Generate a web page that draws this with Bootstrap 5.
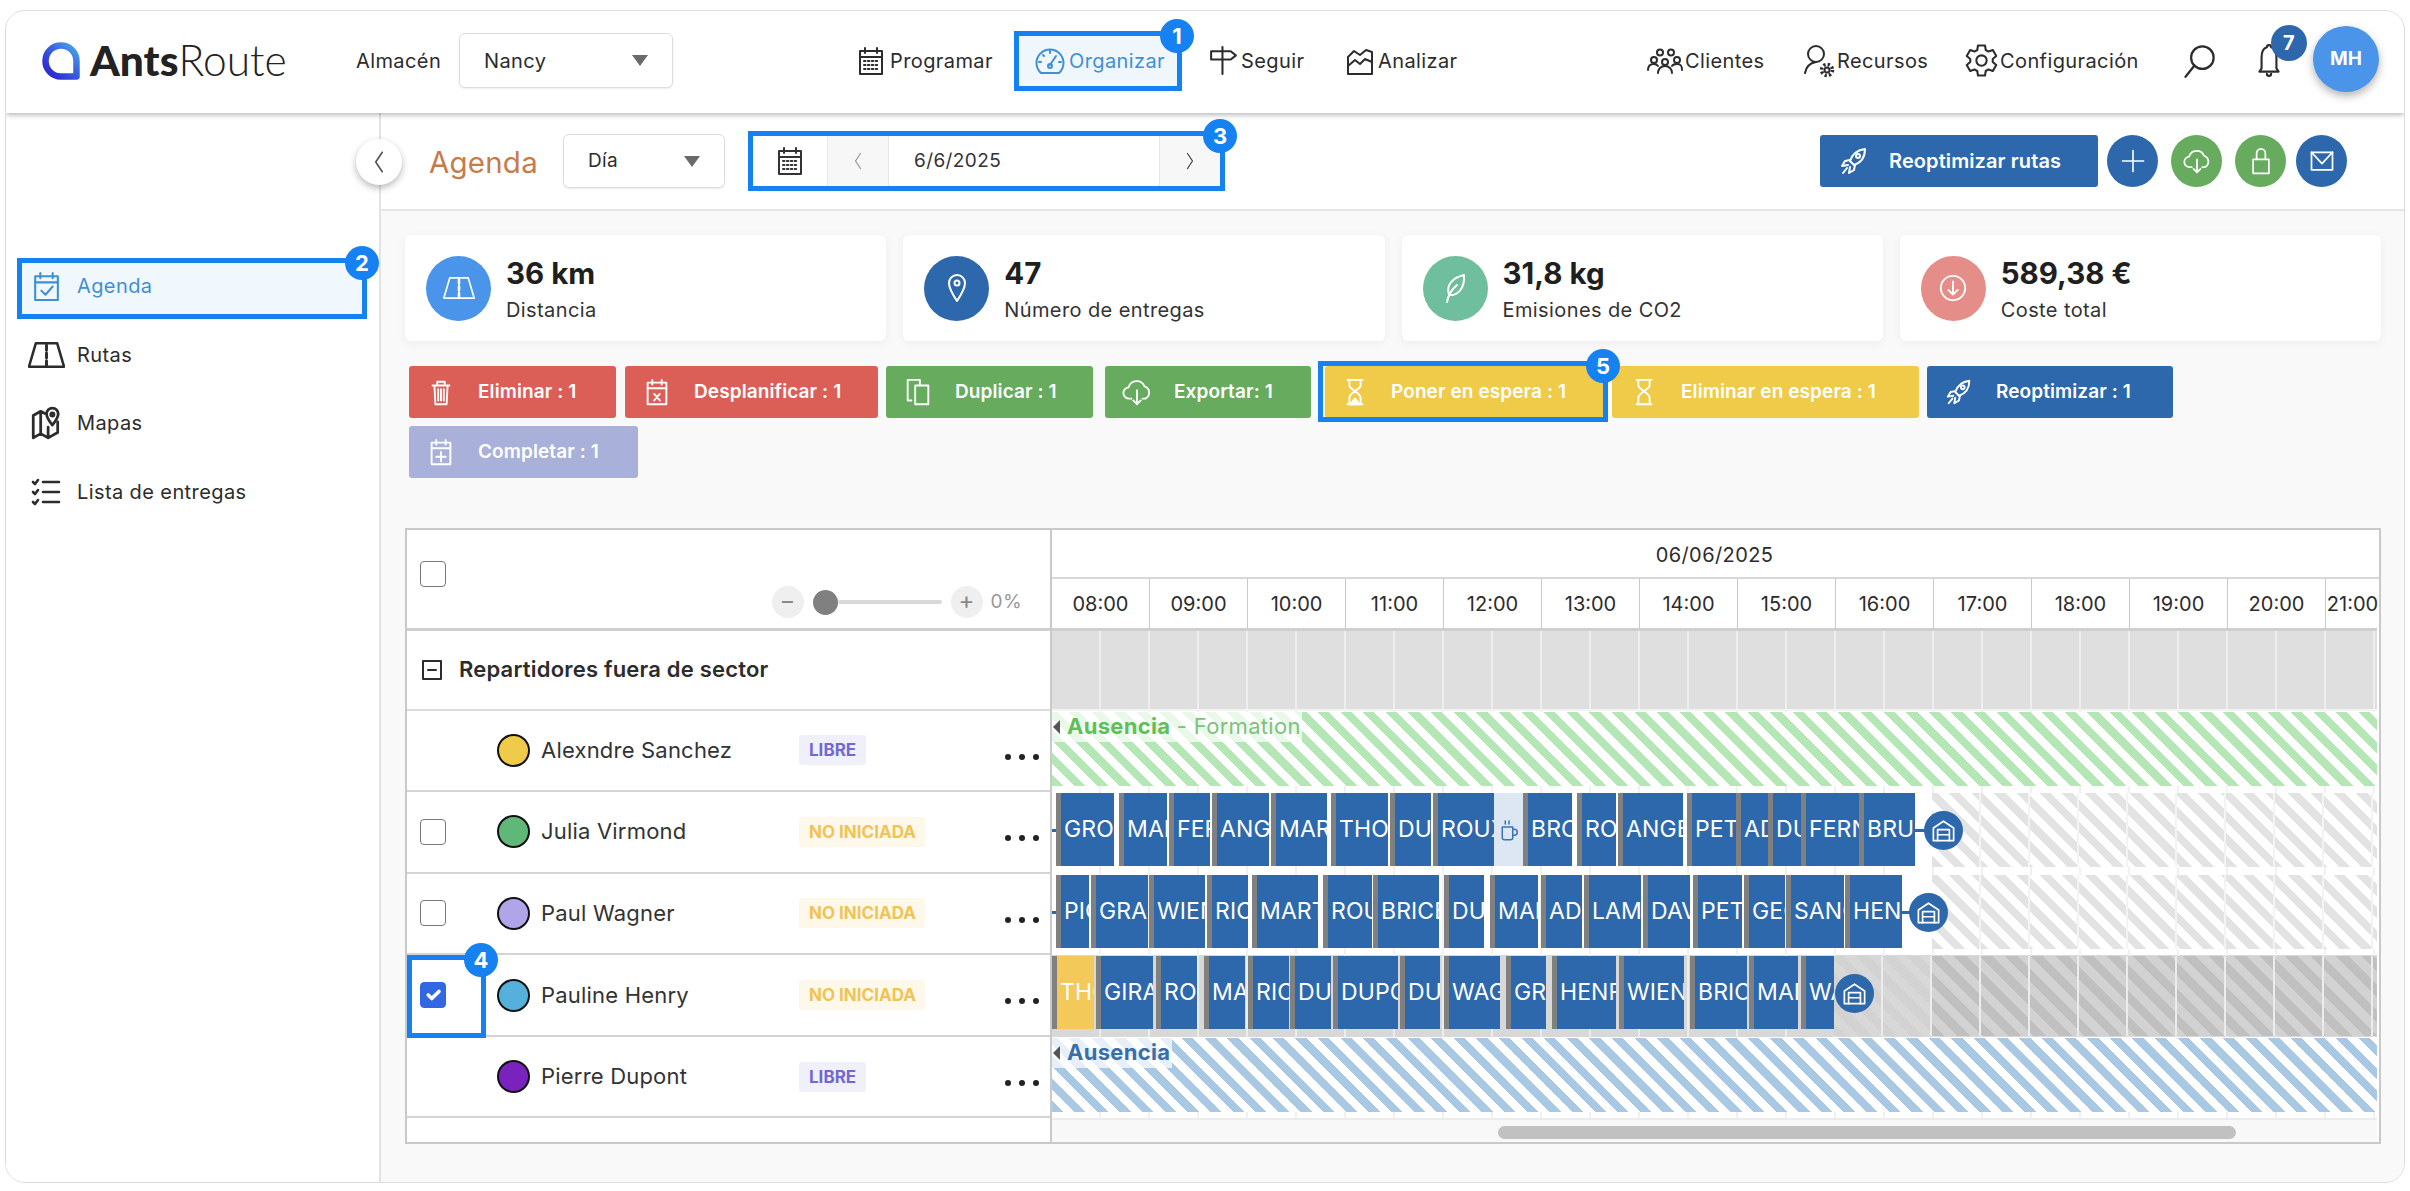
<!DOCTYPE html>
<html lang="es">
<head>
<meta charset="utf-8">
<title>AntsRoute</title>
<link rel="stylesheet" href="https://cdn.jsdelivr.net/npm/bootstrap@5.3.0/dist/css/bootstrap.min.css">
<style>
html,body{background:#fff;height:1191px;overflow:hidden}
body{font-family:"Inter","Noto Sans",sans-serif;font-size:20px;color:#2c2c2c;letter-spacing:.4px}
svg.ic{fill:none;stroke:currentColor;stroke-width:2;stroke-linecap:round;stroke-linejoin:round;flex:none}
svg.ic-h{stroke-width:2.6}
.frame{margin:10px 5px 0;height:1173px;border:1px solid #dcdcdc;border-radius:20px;overflow:hidden;position:relative;background:#fff}
.anno{position:absolute;border:5px solid #1681f0;pointer-events:none;z-index:5}
.anno-b{position:absolute;right:-17px;top:-17px;width:34px;height:34px;border-radius:50%;background:#1681f0;color:#fff;font-weight:700;font-size:22px;line-height:34px;text-align:center;letter-spacing:0;z-index:6}
.hd{height:102px;padding:0 25px 3px 36px;box-shadow:0 2px 5px rgba(0,0,0,.28);position:relative;z-index:3;background:#fff}
.logo{width:250px;font-family:"Lato",sans-serif;font-size:42.500px;letter-spacing:0;color:#222;line-height:1;gap:10px}
.logo b{font-weight:900}.logo span{font-weight:300}
.alm{margin-left:64px;width:103px}
.selbox{border:1px solid #ddd;border-radius:6px;background:#fff;box-shadow:0 1px 2px rgba(0,0,0,.08);padding:0 24px;display:flex;align-items:center;justify-content:space-between}
.sel-a{width:214px;height:55px}
.sel-b{width:162px;height:54px;font-size:19px}
.caret{width:0;height:0;border-left:8px solid transparent;border-right:8px solid transparent;border-top:11px solid #6a6a6a}
.nv{display:flex;align-items:center;height:60px;gap:3px;color:#2c2c2c;text-decoration:none;flex:none;position:relative;white-space:nowrap}
.n1{margin-left:182px;width:141px}
.n2{margin-left:18px;width:168px;background:#eff7fd;color:#3f8fd6;padding-left:20px}
.n3{margin-left:25px;width:96px;gap:1px}
.n4{margin-left:40px;width:112px;gap:1px}
.n5{width:117px;gap:2px}
.n6{margin-left:40px;width:123px;gap:1px}
.n7{margin-left:38px;width:175px;gap:2px}
.n8{margin-left:41px;width:34px}
.n9{margin-left:37px;width:29px}
.avatar{margin-left:32px;width:66px;height:66px;border-radius:50%;background:#4a94e9;color:#fff;font-weight:700;font-size:19px;line-height:66px;text-align:center;box-shadow:0 4px 8px rgba(0,0,0,.3);flex:none;letter-spacing:0;margin-top:-3px}
.b7{position:absolute;left:19px;width:36px;height:36px;border-radius:50%;background:#2e68ac;color:#fff;font-size:20px;font-weight:700;line-height:36px;text-align:center;z-index:2;margin-top:-6px}
.wrapb{height:1070px}
.side{width:375px;flex:none;border-right:2px solid #e3e3e3;padding:145px 0 0 11px;background:#fff}
.sd{display:flex;align-items:center;width:350px;height:61px;color:#2c2c2c;text-decoration:none;margin-bottom:7.5px;position:relative}
.sd .sw{width:60px;display:flex;justify-content:center;flex:none;padding-right:2px}
.sd-on{background:#f0f8fe;color:#3f8fd6;padding-bottom:5px;margin-bottom:5px}
.mainc{flex:1;min-width:0;background:#f9f9f9;position:relative}
.sub{height:98px;background:#fff;border-bottom:2px solid #e6e6e6;padding:0 57px 0 48px;position:relative}
.collapse-b{position:absolute;left:-25px;top:26px;width:46px;height:46px;border-radius:50%;background:#fff;box-shadow:0 3px 7px rgba(0,0,0,.28);display:flex;align-items:center;justify-content:center;z-index:4;color:#555}
.ttl{width:134px;font-size:29.500px;color:#c87b4a;letter-spacing:.2px;padding-top:2px}
.dategrp{margin-left:23px;width:477px;height:60px;position:relative;padding:5px;display:flex;background:#fff}
.dc{display:flex;align-items:center;justify-content:center;height:50px;color:#333}
.dc1{width:75px;border-right:1px solid #e8e8e8}
.dc2{width:61px;background:#f7f7f7;border-right:1px solid #e8e8e8;color:#999}
.dc3{width:271px;border-right:1px solid #e8e8e8;justify-content:flex-start;padding-left:25px;font-size:19px}
.dc4{width:60px;background:#f7f7f7;color:#444}
.reo{width:278px;height:52px;background:#2e68ac;color:#fff;border:0;border-radius:3px;font-weight:600;font-size:20px;display:flex;align-items:center;padding:0 0 0 18px;gap:19px;letter-spacing:.1px}
.cb{width:51px;height:52px;border-radius:50%;display:flex;align-items:center;justify-content:center;color:#fff;border:0;padding:0;flex:none}
.cb-blue{background:#2e68ac}.cb-green{background:#66ab5e}
.mg9{margin-left:9px}.mg13{margin-left:13px}.mg10{margin-left:10px}
.cnt{padding:24px 23px 0 24px}
.kpis{gap:17px}
.kpi{flex:1 1 0;height:106px;background:#fff;border-radius:6px;box-shadow:0 2px 10px rgba(0,0,0,.05);display:flex;align-items:center;padding:0 0 0 21px;gap:15px}
.kc{width:65px;height:65px;border-radius:50%;display:flex;align-items:center;justify-content:center;color:#fff;flex:none}
.ktx{padding-top:3px}
.kv{font-size:29.5px;font-weight:700;line-height:34px;color:#1f1f1f;letter-spacing:0}
.kl{font-size:20px;line-height:28px;margin-top:6px;color:#333}
.acts{margin:25px 0 0 4px;column-gap:8px;row-gap:8px;height:112px;position:relative}
.ab{height:52px;border:0;border-radius:3px;color:#fff;font-weight:600;font-size:19px;display:flex;align-items:center;padding:0;position:relative;white-space:nowrap;letter-spacing:.1px}
.ab .aw{width:69px;display:flex;justify-content:center;flex:none;padding-right:6px}
.r{background:#dc5f57}.g{background:#66ab5e}.y{background:#f0cb4a}.u{background:#2e68ac}.p{background:#a9b0d9}
.a1{width:207px;margin-right:1px}.a2{width:253px}.a3{width:207px;margin-right:4px}.a4{width:206px;margin-right:6px}.a5{width:278px;margin-right:1px}.a6{width:307px}.a7{width:246px}.a8{width:229px}
.a5 .aw{width:66px}
.anno-p{inset:-5px -5px -4px -7px}
.gnt{margin-top:50px;height:616px;border:2px solid #c9c9c9;display:flex;width:1976px;background:#fff}
.gl{width:645px;flex:none;border-right:2px solid #c9c9c9}
.gr{flex:1;min-width:0;display:flex;flex-direction:column}
.lh{height:100.500px;border-bottom:3px solid #cfcfcf;position:relative;padding:31px 0 0 13px;flex:none}
.form-check-input.ck{width:26px;height:26px;margin:0;border:1.5px solid #777;border-radius:4px;background-color:#fff}
.form-check-input.ck:checked{background-color:#3267e3;border-color:#3267e3}
.zoomz{position:absolute;right:28px;top:56px;display:flex;align-items:center;color:#999;font-size:19px}
.zb{width:32px;height:32px;border-radius:50%;background:#efefef;color:#888;font-size:24px;line-height:30px;text-align:center;flex:none}
.zth{width:25px;height:25px;border-radius:50%;background:#808080;margin-left:9px;flex:none}
.ztr{width:104px;height:4px;background:#d9d9d9;border-radius:2px;margin-right:9px;flex:none}
.lg{height:80px;border-bottom:2px solid #dcdcdc;display:flex;align-items:center;padding-left:15px;font-weight:600;font-size:22px;gap:17px;letter-spacing:.2px;flex:none}
.lr{height:81.6px;border-bottom:2px solid #d4d4d4;display:flex;align-items:center;position:relative;padding-left:13px;flex:none}
.cbw{width:77px;flex:none;display:flex;align-items:center}
.dot{width:33px;height:33px;border-radius:50%;border:2px solid #111;flex:none;margin-right:11px}
.nm{width:258px;flex:none;font-size:22px;color:#333;letter-spacing:.2px;white-space:nowrap}
.st{height:30px;font-size:17px;font-weight:700;line-height:30px;padding:0 10px;border-radius:3px;letter-spacing:0;flex:none;white-space:nowrap}
.st-l{background:#f0f0fb;color:#7268d2;width:67px}
.st-n{background:#fef8ea;color:#f0c357;width:126px}
.dots3{position:absolute;left:598px;top:43px;display:flex;gap:8px}
.dots3 i{width:6px;height:6px;border-radius:50%;background:#222;display:block}
.hdate{height:49px;text-align:center;line-height:50px;font-size:20px;border-bottom:2px solid #d8d8d8;padding-right:2px;flex:none}
.hhrs{height:51.500px;display:flex;border-bottom:3px solid #cfcfcf;margin-right:2px;flex:none}
.hh{width:98px;flex:none;border-right:1px solid #c9c9c9;text-align:center;line-height:50px;font-size:20px;letter-spacing:0}
.hh-last{width:53px;border-right:0;font-size:20px}
.grows{flex:1;position:relative;margin-right:2px}
.gw{height:81.6px;position:relative;overflow:hidden;background-color:#fff;background-image:repeating-linear-gradient(90deg,transparent 0 47px,#f1f1f1 47px 49px)}
.gw-g{height:80px;background-color:#dfdfdf;background-image:repeating-linear-gradient(90deg,transparent 0 47px,#eeeeee 47px 49px);border-bottom:2px solid #f3f3f3}
.gs{position:absolute;left:0;right:0;top:1px;height:74px}
.gs-g{background-image:repeating-linear-gradient(45deg,#b5e6b5 0 8px,#fff 8px 16px)}
.gs-b{background-image:repeating-linear-gradient(45deg,#a9c8e4 0 8px,#fff 8px 16px)}
.gs-n{left:880px;background-image:repeating-linear-gradient(90deg,transparent 0 47px,#f3f3f3 47px 49px),repeating-linear-gradient(45deg,#e3e3e3 0 8px,#fff 8px 16px)}
.gw-d{background-color:#d8d8d8;background-image:repeating-linear-gradient(90deg,transparent 0 47px,#ececec 47px 49px)}
.gs-d{left:880px;height:80px;background-image:repeating-linear-gradient(90deg,transparent 0 47px,#ececec 47px 49px),repeating-linear-gradient(45deg,#c0c0c0 0 9px,#d2d2d2 9px 18px)}
.gs-e{left:782px;right:445px;height:80px;background-image:repeating-linear-gradient(90deg,transparent 0 47px,#ececec 47px 49px),repeating-linear-gradient(45deg,#d2d2d2 0 9px,#d8d8d8 9px 18px)}
.lab{position:absolute;left:0;top:1px;height:30px;background:rgba(255,255,255,.72);font-size:22px;line-height:28px;padding-left:15px;letter-spacing:.3px;white-space:nowrap;overflow:hidden}
.lab::before{content:"";position:absolute;left:1px;top:8px;border-top:7px solid transparent;border-bottom:7px solid transparent;border-right:7px solid #555}
.lab-g{width:250px;color:#7cc27c}.lab-g b{color:#5fc05a;font-weight:700}
.lab-b{width:120px;color:#3a6ea8}.lab-b b{font-weight:700}
.bk{position:absolute;top:1px;height:73px;background:#2e68ac;border-left:5px solid #808080;color:#fff;font-size:23px;line-height:73px;padding-left:3px;overflow:hidden;white-space:nowrap;letter-spacing:.1px}
.bk-y{background:#f3c95a;color:#fff}
.brk{position:absolute;top:1px;height:73px;background:#dde7f3;color:#3b74b5;display:flex;align-items:center;justify-content:center}
.dep{position:absolute;width:39px;height:39px;border-radius:50%;background:#2e68ac;color:#fff;display:flex;align-items:center;justify-content:center;z-index:2}
.lnk{position:absolute;height:3px;background:#2e68ac}
.sb{height:23.500px;background:#f8f8f8;border-top:2px solid #ececec;position:relative}
.sbt{position:absolute;left:446px;top:6px;width:738px;height:13px;border-radius:7px;background:#c1c1c1}
</style>
</head>
<body>
<svg width="0" height="0" class="position-absolute">
<defs>
<linearGradient id="lg1" x1="0" x2="1" y1="1" y2="0"><stop offset="0" stop-color="#2a1fd0"/><stop offset=".55" stop-color="#3a5fe0"/><stop offset="1" stop-color="#4ba8e8"/></linearGradient>
<symbol id="i-cal" viewBox="0 0 32 32"><rect x="5" y="6" width="22" height="23"/><path d="M5 12h22M10 3v5M22 3v5"/><path d="M9 16h14M9 20h14M9 24h14" stroke-dasharray="1.5 2.4"/></symbol>
<symbol id="i-calc" viewBox="0 0 32 32"><rect x="5" y="6" width="22" height="23"/><path d="M5 12h22M10 3v5M22 3v5M11 20l4 4 7-8"/></symbol>
<symbol id="i-calx" viewBox="0 0 32 32"><rect x="6" y="6" width="20" height="23"/><path d="M6 12h20M11 3v5M21 3v5M13 18l6 7M19 18l-6 7"/></symbol>
<symbol id="i-calp" viewBox="0 0 32 32"><rect x="6" y="6" width="20" height="23"/><path d="M6 12h20M11 3v5M21 3v5M16 16v10M11 21h10"/></symbol>
<symbol id="i-gauge" viewBox="0 0 32 32"><path d="M7 28a13.5 13.5 0 1 1 18 0z"/><path d="M16 20l6-9M5 17h2M25 17h2M16 6v2M9 10l1 1"/><circle cx="16" cy="21" r="2"/></symbol>
<symbol id="i-sign" viewBox="0 0 32 32"><path d="M15 3v26M4 7h19l5 4-5 4H4z"/></symbol>
<symbol id="i-chart" viewBox="0 0 32 32"><path d="M4 12l6-6 6 4 6-5 6 2v22H4z"/><path d="M4 21l7-6 5 4 5-5 7 3"/></symbol>
<symbol id="i-people" viewBox="0 0 36 26"><circle cx="13" cy="4.500" r="3"/><circle cx="24" cy="4.500" r="3"/><circle cx="7" cy="12" r="3"/><circle cx="18" cy="14" r="3"/><circle cx="30" cy="12" r="3"/><path d="M1 22c0-4 2-6 6-6 2 0 3 .5 4 2M25 18c1-1.500 3-2 5-2 4 0 5 2 5 6M11 25c0-4 3-7 7-7s7 3 7 7"/></symbol>
<symbol id="i-res" viewBox="0 0 32 34"><circle cx="12" cy="10" r="8"/><path d="M1 29c1-6 5-10 11-11"/><circle cx="23" cy="26" r="2.500"/><circle cx="23" cy="26" r="5.500" stroke-dasharray="2.200 2.120" stroke-width="3.500" stroke-linecap="butt"/></symbol>
<symbol id="i-gear" viewBox="0 0 32 32"><path d="M12.600 1.400H19.400L20.100 5.800L22.800 7.300L27 5.800L30.300 11.600L26.900 14.500V17.500L30.300 20.400L27 26.200L22.800 24.700L20.100 26.200L19.400 30.600H12.600L11.900 26.200L9.200 24.700L5 26.200L1.700 20.400L5.100 17.500V14.500L1.700 11.600L5 5.800L9.200 7.300L11.900 5.800Z"/><circle cx="16" cy="16" r="5"/></symbol>
<symbol id="i-search" viewBox="0 0 32 32"><circle cx="19" cy="13" r="10"/><path d="M12 20l-8 10"/></symbol>
<symbol id="i-bell" viewBox="0 0 32 32"><path d="M16 1a2 2 0 0 1 2 2c4 1 5 5 5 10v10l2 3H7l2-3V13c0-5 1-9 5-10a2 2 0 0 1 2-2z"/><path d="M14 28a2 2 0 0 0 4 0"/></symbol>
<symbol id="i-rocket" viewBox="0 0 32 32"><path d="M27 4c-8 1-13 6-15 12l4 4c6-2 11-7 11-16z"/><path d="M12 15l-5 1-3 5 6-1M17 20l-1 5-5 3 1-6M9 23l-4 5"/><circle cx="20" cy="11" r="2"/></symbol>
<symbol id="i-plus" viewBox="0 0 32 32"><path d="M16 3v26M3 16h26"/></symbol>
<symbol id="i-cloud" viewBox="0 0 32 32"><path d="M10 23H8a6 6 0 0 1-1-12 9 9 0 0 1 17-1 7 7 0 0 1 1 13h-3"/><path d="M16 14v15m-4-4 4 4 4-4"/></symbol>
<symbol id="i-lock" viewBox="0 0 32 32"><rect x="7" y="14" width="18" height="16"/><path d="M11 14V7a5 5 0 0 1 10 0v7"/></symbol>
<symbol id="i-mail" viewBox="0 0 32 32"><rect x="4" y="6" width="24" height="20"/><path d="M4 6l12 13L28 6"/></symbol>
<symbol id="i-road" viewBox="0 0 38 26"><path d="M8 1h22l7 24H1z"/><path d="M19 3v5M19 11v5M19 19v5" stroke-width="3"/></symbol>
<symbol id="i-map" viewBox="0 0 32 32"><path d="M4 9l7-4 4 2M4 9v21l7-4 7 4 9-5V15M11 5v21M18 20v10"/><path d="M22 2a5.500 5.500 0 0 1 5.500 5.500C27.500 11 22 18 22 18s-5.500-7-5.500-10.500A5.500 5.500 0 0 1 22 2z"/><circle cx="22" cy="8" r="1.500"/></symbol>
<symbol id="i-list" viewBox="0 0 32 32"><path d="M3 6l2 2 3-4M3 16l2 2 3-4M3 26l2 2 3-4M13 6h16M13 16h16M13 26h16"/></symbol>
<symbol id="i-trash" viewBox="0 0 32 32"><path d="M7 9h18M12 9V5h8v4M9 9l1 20h12l1-20M13 13v12M16 13v12M19 13v12"/></symbol>
<symbol id="i-copy" viewBox="0 0 32 32"><rect x="13" y="9" width="14" height="20"/><path d="M9 25H5V3h13v6"/></symbol>
<symbol id="i-hour" viewBox="0 0 32 32"><path d="M8 3h16M8 29h16M10 3v6c0 4 12 8 12 13v7M22 3v6c0 4-12 8-12 13v7"/></symbol>
<symbol id="i-hourf" viewBox="0 0 32 32"><path d="M8 3h16M8 29h16M10 3v6c0 4 12 8 12 13v7M22 3v6c0 4-12 8-12 13v7"/><path d="M11 29l5-6 5 6z" fill="currentColor"/></symbol>
<symbol id="i-pin" viewBox="0 0 32 32"><path d="M16 3a8 8 0 0 1 8 8c0 6-8 18-8 18S8 17 8 11a8 8 0 0 1 8-8z"/><circle cx="16" cy="11" r="2.500"/></symbol>
<symbol id="i-leaf" viewBox="0 0 32 32"><path d="M25 3C13 6 7 13 10 23c9 1 16-7 15-20z"/><path d="M8 30c1-6 4-12 10-17"/></symbol>
<symbol id="i-down" viewBox="0 0 32 32"><circle cx="16" cy="16" r="13"/><path d="M16 9v14m-5-5 5 5 5-5"/></symbol>
<symbol id="i-cup" viewBox="0 0 32 32"><path d="M7 12h14v14a3 3 0 0 1-3 3h-8a3 3 0 0 1-3-3z"/><path d="M21 15h2a3 3 0 0 1 0 8h-2M11 4v4M16 4v4"/></symbol>
<symbol id="i-ware" viewBox="0 0 32 32"><path d="M4 13L16 5l12 8v15H4z"/><path d="M9 28V15h14v13M9 21h14"/></symbol>
<symbol id="i-minus" viewBox="0 0 20 20"><rect x="1" y="1" width="18" height="18"/><path d="M6 10h8"/></symbol>
<symbol id="i-l" viewBox="0 0 16 32"><path d="M12 4L4 16l8 12"/></symbol>
<symbol id="i-r" viewBox="0 0 16 32"><path d="M4 4l8 12-8 12"/></symbol>
</defs>
</svg>

<div class="frame">
  <header class="hd d-flex align-items-center">
    <div class="logo d-flex align-items-center flex-shrink-0">
      <svg width="38" height="38" viewBox="0 0 38 38" class="flex-shrink-0"><path d="M19 3.500A15.500 15.500 0 0 1 34.500 19V34.500H19A15.500 15.500 0 0 1 19 3.500Z" fill="none" stroke="url(#lg1)" stroke-width="6.500" stroke-linejoin="round"/></svg>
      <div><b>Ants</b><span>Route</span></div>
    </div>
    <div class="alm flex-shrink-0">Almacén</div>
    <div class="selbox sel-a flex-shrink-0"><span>Nancy</span><i class="caret"></i></div>
    <a class="nv n1" href="#"><svg class="ic" width="32" height="32"><use href="#i-cal"/></svg>Programar</a>
    <a class="nv n2" href="#"><svg class="ic" width="32" height="32"><use href="#i-gauge"/></svg>Organizar<span class="anno top-0 start-0 w-100 h-100"><span class="anno-b">1</span></span></a>
    <a class="nv n3" href="#"><svg class="ic" width="33" height="33"><use href="#i-sign"/></svg>Seguir</a>
    <a class="nv n4" href="#"><svg class="ic" width="34" height="32"><use href="#i-chart"/></svg>Analizar</a>
    <div class="ms-auto d-flex align-items-center">
      <a class="nv n5" href="#"><svg class="ic" width="36" height="26"><use href="#i-people"/></svg>Clientes</a>
      <a class="nv n6" href="#"><svg class="ic" width="32" height="34"><use href="#i-res"/></svg>Recursos</a>
      <a class="nv n7" href="#"><svg class="ic" width="33" height="33"><use href="#i-gear"/></svg>Configuración</a>
      <a class="nv n8" href="#" aria-label="Buscar"><svg class="ic" width="36" height="36"><use href="#i-search"/></svg></a>
      <a class="nv n9" href="#" aria-label="Avisos"><svg class="ic" width="34" height="34"><use href="#i-bell"/></svg><span class="b7 top-0">7</span></a>
      <div class="avatar">MH</div>
    </div>
  </header>

  <div class="d-flex wrapb">
    <aside class="side">
      <a class="sd sd-on" href="#"><span class="sw"><svg class="ic" width="33" height="33"><use href="#i-calc"/></svg></span>Agenda<span class="anno top-0 start-0 w-100 h-100"><span class="anno-b">2</span></span></a>
      <a class="sd" href="#"><span class="sw"><svg class="ic ic-h" width="37" height="26"><use href="#i-road"/></svg></span>Rutas</a>
      <a class="sd" href="#"><span class="sw"><svg class="ic ic-h" width="34" height="34"><use href="#i-map"/></svg></span>Mapas</a>
      <a class="sd" href="#"><span class="sw"><svg class="ic ic-h" width="32" height="32"><use href="#i-list"/></svg></span>Lista de entregas</a>
    </aside>

    <main class="mainc">
      <div class="sub d-flex align-items-center">
        <div class="collapse-b"><svg class="ic" width="14" height="26"><use href="#i-l"/></svg></div>
        <div class="ttl">Agenda</div>
        <div class="selbox sel-b"><span>Día</span><i class="caret"></i></div>
        <div class="dategrp">
          <div class="dc dc1"><svg class="ic" width="32" height="32"><use href="#i-cal"/></svg></div>
          <div class="dc dc2"><svg class="ic" width="10" height="20"><use href="#i-l"/></svg></div>
          <div class="dc dc3">6/6/2025</div>
          <div class="dc dc4"><svg class="ic" width="10" height="20"><use href="#i-r"/></svg></div>
          <span class="anno top-0 start-0 w-100 h-100"><span class="anno-b">3</span></span>
        </div>
        <div class="ms-auto d-flex align-items-center">
          <button class="reo"><svg class="ic" width="32" height="32"><use href="#i-rocket"/></svg>Reoptimizar rutas</button>
          <button class="cb cb-blue mg9" aria-label="Añadir"><svg class="ic" width="26" height="26"><use href="#i-plus"/></svg></button>
          <button class="cb cb-green mg13" aria-label="Exportar"><svg class="ic" width="28" height="30"><use href="#i-cloud"/></svg></button>
          <button class="cb cb-green mg13" aria-label="Bloquear"><svg class="ic" width="28" height="30"><use href="#i-lock"/></svg></button>
          <button class="cb cb-blue mg10" aria-label="Correo"><svg class="ic" width="28" height="28"><use href="#i-mail"/></svg></button>
        </div>
      </div>

      <div class="cnt">
        <div class="d-flex kpis">
          <div class="kpi"><span class="kc" style="background:#4a94e9"><svg class="ic" width="32" height="24"><use href="#i-road"/></svg></span><div class="ktx"><div class="kv">36 km</div><div class="kl">Distancia</div></div></div>
          <div class="kpi"><span class="kc" style="background:#2e68ac"><svg class="ic" width="32" height="32"><use href="#i-pin"/></svg></span><div class="ktx"><div class="kv">47</div><div class="kl">Número de entregas</div></div></div>
          <div class="kpi"><span class="kc" style="background:#6fbf9f"><svg class="ic" width="32" height="32"><use href="#i-leaf"/></svg></span><div class="ktx"><div class="kv">31,8 kg</div><div class="kl">Emisiones de CO2</div></div></div>
          <div class="kpi"><span class="kc" style="background:#e58d88"><svg class="ic" width="30" height="30"><use href="#i-down"/></svg></span><div class="ktx"><div class="kv">589,38 €</div><div class="kl">Coste total</div></div></div>
        </div>

        <div class="acts d-flex flex-wrap align-content-start">
          <button class="ab r a1"><span class="aw"><svg class="ic" width="30" height="30"><use href="#i-trash"/></svg></span>Eliminar : 1</button>
          <button class="ab r a2"><span class="aw"><svg class="ic" width="30" height="30"><use href="#i-calx"/></svg></span>Desplanificar : 1</button>
          <button class="ab g a3"><span class="aw"><svg class="ic" width="30" height="30"><use href="#i-copy"/></svg></span>Duplicar : 1</button>
          <button class="ab g a4"><span class="aw"><svg class="ic" width="30" height="32"><use href="#i-cloud"/></svg></span>Exportar: 1</button>
          <button class="ab y a5"><span class="aw"><svg class="ic" width="30" height="32"><use href="#i-hourf"/></svg></span>Poner en espera : 1<span class="anno anno-p"><span class="anno-b">5</span></span></button>
          <button class="ab y a6"><span class="aw"><svg class="ic" width="30" height="32"><use href="#i-hour"/></svg></span>Eliminar en espera : 1</button>
          <button class="ab u a7"><span class="aw"><svg class="ic" width="30" height="30"><use href="#i-rocket"/></svg></span>Reoptimizar : 1</button>
          <button class="ab p a8"><span class="aw"><svg class="ic" width="30" height="30"><use href="#i-calp"/></svg></span>Completar : 1</button>
        </div>

        <div class="gnt">
          <div class="gl d-flex flex-column">
            <div class="lh">
              <input class="form-check-input ck d-block" type="checkbox" aria-label="Todo">
              <div class="zoomz"><span class="zb">−</span><span class="zth"></span><span class="ztr"></span><span class="zb">+</span><span class="ms-2">0%</span></div>
            </div>
            <div class="lg"><svg class="ic" width="20" height="20"><use href="#i-minus"/></svg>Repartidores fuera de sector</div>
            <div class="lr"><span class="cbw"></span><span class="dot" style="background:#f0cb4a"></span><span class="nm">Alexndre Sanchez</span><span class="st st-l">LIBRE</span><span class="dots3"><i></i><i></i><i></i></span></div>
            <div class="lr"><span class="cbw"><input class="form-check-input ck" type="checkbox" aria-label="Julia"></span><span class="dot" style="background:#5fb878"></span><span class="nm">Julia Virmond</span><span class="st st-n">NO INICIADA</span><span class="dots3"><i></i><i></i><i></i></span></div>
            <div class="lr"><span class="cbw"><input class="form-check-input ck" type="checkbox" aria-label="Paul"></span><span class="dot" style="background:#b0a5e8"></span><span class="nm">Paul Wagner</span><span class="st st-n">NO INICIADA</span><span class="dots3"><i></i><i></i><i></i></span></div>
            <div class="lr"><span class="cbw"><input class="form-check-input ck" type="checkbox" checked aria-label="Pauline"></span><span class="dot" style="background:#56b0dc"></span><span class="nm">Pauline Henry</span><span class="st st-n">NO INICIADA</span><span class="dots3"><i></i><i></i><i></i></span>
              <span class="anno top-0 start-0" style="width:79px;height:83px"><span class="anno-b">4</span></span></div>
            <div class="lr"><span class="cbw"></span><span class="dot" style="background:#7a22bd"></span><span class="nm">Pierre Dupont</span><span class="st st-l">LIBRE</span><span class="dots3"><i></i><i></i><i></i></span></div>
          </div>
          <div class="gr">
            <div class="hdate">06/06/2025</div>
            <div class="hhrs"><div class="hh">08:00</div><div class="hh">09:00</div><div class="hh">10:00</div><div class="hh">11:00</div><div class="hh">12:00</div><div class="hh">13:00</div><div class="hh">14:00</div><div class="hh">15:00</div><div class="hh">16:00</div><div class="hh">17:00</div><div class="hh">18:00</div><div class="hh">19:00</div><div class="hh">20:00</div><div class="hh hh-last">21:00</div></div>
            <div class="grows">
              <div class="gw gw-g"></div>
              <div class="gw"><div class="gs gs-g"></div><div class="lab lab-g"><b>Ausencia</b> - Formation</div></div>
              <div class="gw"><div class="gs gs-n"></div>
                <span class="lnk" style="left:0;width:4px;top:37px"></span>
                <div class="bk" style="left:4px;width:58px">GROSJEAN</div><div class="bk" style="left:67px;width:48px">MARTIN</div><div class="bk" style="left:117px;width:41px">FERNANDEZ</div><div class="bk" style="left:160px;width:57px">ANGELO</div><div class="bk" style="left:219px;width:56px">MARTIN</div><div class="bk" style="left:279px;width:57px">THOMAS</div><div class="bk" style="left:338px;width:41px">DUBOIS</div><div class="bk" style="left:381px;width:61px">ROUX</div>
                <div class="brk" style="left:442px;width:29px"><svg class="ic" width="24" height="24"><use href="#i-cup"/></svg></div>
                <div class="bk" style="left:471px;width:49px">BROWN</div><div class="bk" style="left:525px;width:39px">ROUX</div><div class="bk" style="left:566px;width:65px">ANGELO</div><div class="bk" style="left:635px;width:49px">PETIT</div><div class="bk" style="left:684px;width:32px">ADAM</div><div class="bk" style="left:716px;width:33px">DUPONT</div><div class="bk" style="left:749px;width:58px">FERNANDEZ</div><div class="bk" style="left:807px;width:56px">BRUNO</div>
                <span class="lnk" style="left:863px;width:10px;top:37px"></span>
                <div class="dep" style="left:872px;top:19px"><svg class="ic" width="27" height="27"><use href="#i-ware"/></svg></div>
              </div>
              <div class="gw"><div class="gs gs-n"></div>
                <span class="lnk" style="left:0;width:4px;top:37px"></span>
                <div class="bk" style="left:4px;width:33px">PICARD</div><div class="bk" style="left:39px;width:57px">GRAND</div><div class="bk" style="left:97px;width:56px">WIENER</div><div class="bk" style="left:155px;width:41px">RICHARD</div><div class="bk" style="left:200px;width:66px">MARTIN</div><div class="bk" style="left:271px;width:49px">ROUSSEAU</div><div class="bk" style="left:321px;width:66px">BRICE</div><div class="bk" style="left:392px;width:40px">DURAND</div><div class="bk" style="left:438px;width:48px">MARTIN</div><div class="bk" style="left:489px;width:41px">ADAM</div><div class="bk" style="left:532px;width:57px">LAMBERT</div><div class="bk" style="left:591px;width:47px">DAVID</div><div class="bk" style="left:641px;width:49px">PETIT</div><div class="bk" style="left:692px;width:41px">GEORGES</div><div class="bk" style="left:734px;width:58px">SANCHEZ</div><div class="bk" style="left:793px;width:57px">HENRY</div>
                <span class="lnk" style="left:850px;width:9px;top:37px"></span>
                <div class="dep" style="left:857px;top:19px"><svg class="ic" width="27" height="27"><use href="#i-ware"/></svg></div>
              </div>
              <div class="gw gw-d"><div class="gs gs-e"></div><div class="gs gs-d"></div>
                <div class="bk bk-y" style="left:0;width:42px">THOMAS</div><div class="bk" style="left:44px;width:57px">GIRARD</div><div class="bk" style="left:104px;width:41px">ROUX</div><div class="bk" style="left:152px;width:41px">MARTIN</div><div class="bk" style="left:196px;width:41px">RICHARD</div><div class="bk" style="left:238px;width:41px">DUBOIS</div><div class="bk" style="left:281px;width:65px">DUPONT</div><div class="bk" style="left:348px;width:40px">DURAND</div><div class="bk" style="left:392px;width:56px">WAGNER</div><div class="bk" style="left:454px;width:40px">GROS</div><div class="bk" style="left:500px;width:64px">HENRY</div><div class="bk" style="left:567px;width:65px">WIENER</div><div class="bk" style="left:638px;width:57px">BRICE</div><div class="bk" style="left:697px;width:49px">MARTIN</div><div class="bk" style="left:749px;width:33px">WAGNER</div>
                <div class="dep" style="left:783px;top:19px"><svg class="ic" width="27" height="27"><use href="#i-ware"/></svg></div>
              </div>
              <div class="gw"><div class="gs gs-b"></div><div class="lab lab-b"><b>Ausencia</b></div></div>
              <div class="sb"><div class="sbt"></div></div>
            </div>
          </div>
        </div>
      </div>
    </main>
  </div>
</div>
<script src="https://cdn.jsdelivr.net/npm/bootstrap@5.3.0/dist/js/bootstrap.bundle.min.js"></script>
</body>
</html>
